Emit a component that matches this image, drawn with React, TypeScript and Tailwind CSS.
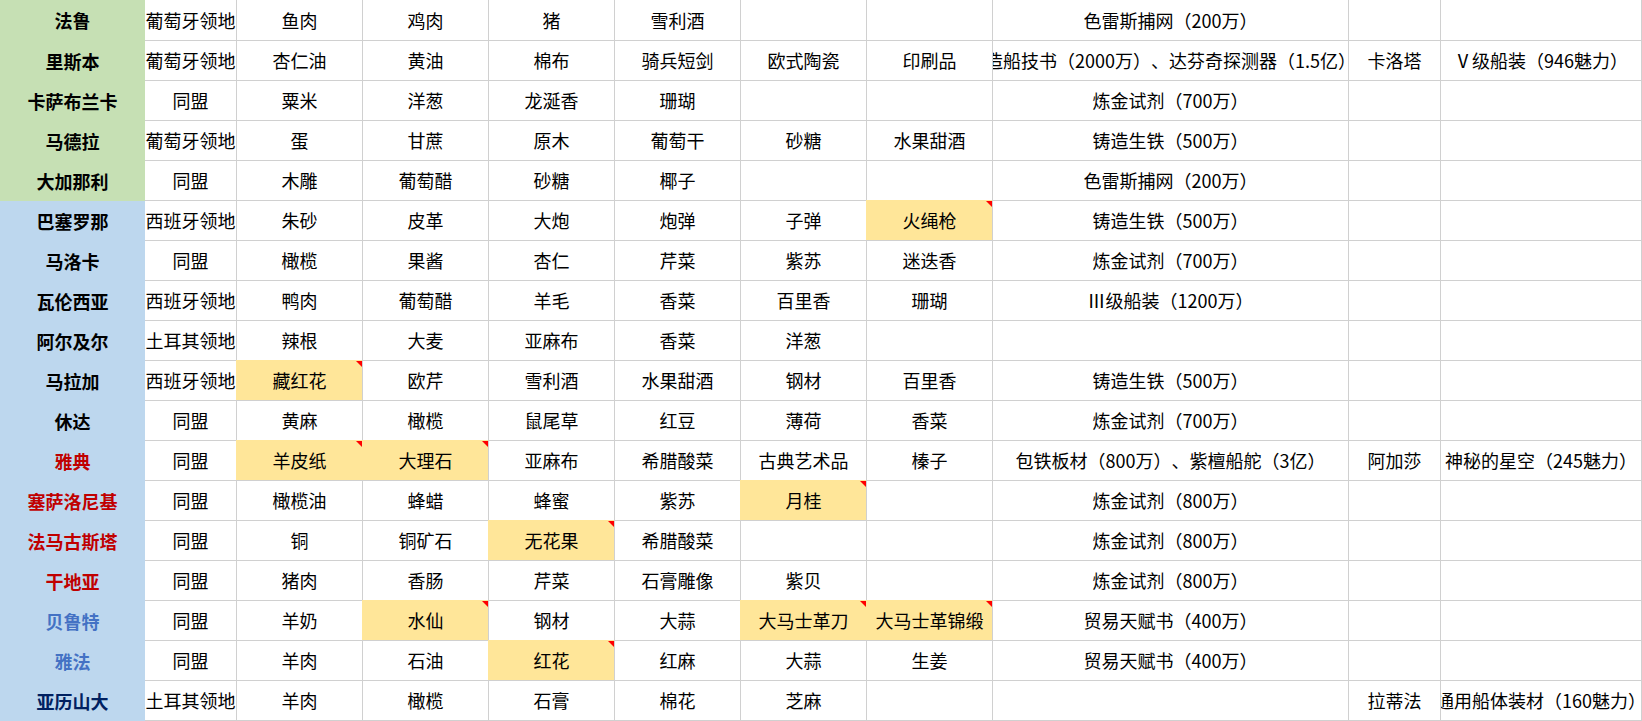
import React from 'react';

type NameTone = 'black' | 'red' | 'blue' | 'navy';

interface PortRow {
  name: string;
  region: 'green' | 'blue';
  tone: NameTone;
  status: string;
  goods: string[]; // six goods, "*" prefix = highlighted with comment mark
  reward: string;
  npc?: string;
  bonus?: string;
}

const rows: PortRow[] = [
  { name: '法鲁', region: 'green', tone: 'black', status: '葡萄牙领地', goods: ['鱼肉', '鸡肉', '猪', '雪利酒', '', ''], reward: '色雷斯捕网（200万）' },
  { name: '里斯本', region: 'green', tone: 'black', status: '葡萄牙领地', goods: ['杏仁油', '黄油', '棉布', '骑兵短剑', '欧式陶瓷', '印刷品'], reward: '造船技书（2000万）、达芬奇探测器（1.5亿）', npc: '卡洛塔', bonus: 'Ⅴ级船装（946魅力）' },
  { name: '卡萨布兰卡', region: 'green', tone: 'black', status: '同盟', goods: ['粟米', '洋葱', '龙涎香', '珊瑚', '', ''], reward: '炼金试剂（700万）' },
  { name: '马德拉', region: 'green', tone: 'black', status: '葡萄牙领地', goods: ['蛋', '甘蔗', '原木', '葡萄干', '砂糖', '水果甜酒'], reward: '铸造生铁（500万）' },
  { name: '大加那利', region: 'green', tone: 'black', status: '同盟', goods: ['木雕', '葡萄醋', '砂糖', '椰子', '', ''], reward: '色雷斯捕网（200万）' },
  { name: '巴塞罗那', region: 'blue', tone: 'black', status: '西班牙领地', goods: ['朱砂', '皮革', '大炮', '炮弹', '子弹', '*火绳枪'], reward: '铸造生铁（500万）' },
  { name: '马洛卡', region: 'blue', tone: 'black', status: '同盟', goods: ['橄榄', '果酱', '杏仁', '芹菜', '紫苏', '迷迭香'], reward: '炼金试剂（700万）' },
  { name: '瓦伦西亚', region: 'blue', tone: 'black', status: '西班牙领地', goods: ['鸭肉', '葡萄醋', '羊毛', '香菜', '百里香', '珊瑚'], reward: 'Ⅲ级船装（1200万）' },
  { name: '阿尔及尔', region: 'blue', tone: 'black', status: '土耳其领地', goods: ['辣根', '大麦', '亚麻布', '香菜', '洋葱', ''], reward: '' },
  { name: '马拉加', region: 'blue', tone: 'black', status: '西班牙领地', goods: ['*藏红花', '欧芹', '雪利酒', '水果甜酒', '钢材', '百里香'], reward: '铸造生铁（500万）' },
  { name: '休达', region: 'blue', tone: 'black', status: '同盟', goods: ['黄麻', '橄榄', '鼠尾草', '红豆', '薄荷', '香菜'], reward: '炼金试剂（700万）' },
  { name: '雅典', region: 'blue', tone: 'red', status: '同盟', goods: ['*羊皮纸', '*大理石', '亚麻布', '希腊酸菜', '古典艺术品', '榛子'], reward: '包铁板材（800万）、紫檀船舵（3亿）', npc: '阿加莎', bonus: '神秘的星空（245魅力）' },
  { name: '塞萨洛尼基', region: 'blue', tone: 'red', status: '同盟', goods: ['橄榄油', '蜂蜡', '蜂蜜', '紫苏', '*月桂', ''], reward: '炼金试剂（800万）' },
  { name: '法马古斯塔', region: 'blue', tone: 'red', status: '同盟', goods: ['铜', '铜矿石', '*无花果', '希腊酸菜', '', ''], reward: '炼金试剂（800万）' },
  { name: '干地亚', region: 'blue', tone: 'red', status: '同盟', goods: ['猪肉', '香肠', '芹菜', '石膏雕像', '紫贝', ''], reward: '炼金试剂（800万）' },
  { name: '贝鲁特', region: 'blue', tone: 'blue', status: '同盟', goods: ['羊奶', '*水仙', '钢材', '大蒜', '*大马士革刀', '*大马士革锦缎'], reward: '贸易天赋书（400万）' },
  { name: '雅法', region: 'blue', tone: 'blue', status: '同盟', goods: ['羊肉', '石油', '*红花', '红麻', '大蒜', '生姜'], reward: '贸易天赋书（400万）' },
  { name: '亚历山大', region: 'blue', tone: 'navy', status: '土耳其领地', goods: ['羊肉', '橄榄', '石膏', '棉花', '芝麻', ''], reward: '', npc: '拉蒂法', bonus: '通用船体装材（160魅力）' },
];

const toneClass: Record<NameTone, string> = {
  black: 'text-black',
  red: 'text-[#c00000]',
  blue: 'text-[#4472c4]',
  navy: 'text-[#002060]',
};

const Cell: React.FC<{ text?: string }> = ({ text = '' }) => {
  const marked = text.startsWith('*');
  const label = marked ? text.slice(1) : text;
  return (
    <div
      className={`relative flex items-center justify-center overflow-hidden whitespace-nowrap border-b border-r border-[#d0d0d0] ${
        marked ? 'bg-[#ffe699] shadow-[-1px_-1px_0_#ffe699]' : 'bg-white'
      }`}
    >
      <span className="shrink-0">{label}</span>
      {marked && (
        <span className="absolute top-0 right-0 h-0 w-0 border-l-[6px] border-t-[6px] border-l-transparent border-t-[#ff0000]" />
      )}
    </div>
  );
};

export default function App() {
  return (
    <div className="min-h-screen w-[1642px] bg-white font-['Noto_Sans_CJK_SC','Microsoft_YaHei',sans-serif] text-[18px] text-black [text-spacing-trim:space-all]">
      <div className="grid grid-cols-[145px_92px_126px_126px_126px_126px_126px_126px_356px_92px_201px] grid-rows-[41px_repeat(17,40px)]">
        {rows.map((row) => (
          <React.Fragment key={row.name}>
            <div
              className={`flex items-center justify-center font-bold whitespace-nowrap ${
                row.region === 'green' ? 'bg-[#c6e0b4]' : 'bg-[#bdd7ee]'
              } ${toneClass[row.tone]}`}
            >
              {row.name}
            </div>
            <Cell text={row.status} />
            {row.goods.map((g, i) => (
              <Cell key={i} text={g} />
            ))}
            <Cell text={row.reward} />
            <Cell text={row.npc} />
            <Cell text={row.bonus} />
          </React.Fragment>
        ))}
      </div>
    </div>
  );
}
